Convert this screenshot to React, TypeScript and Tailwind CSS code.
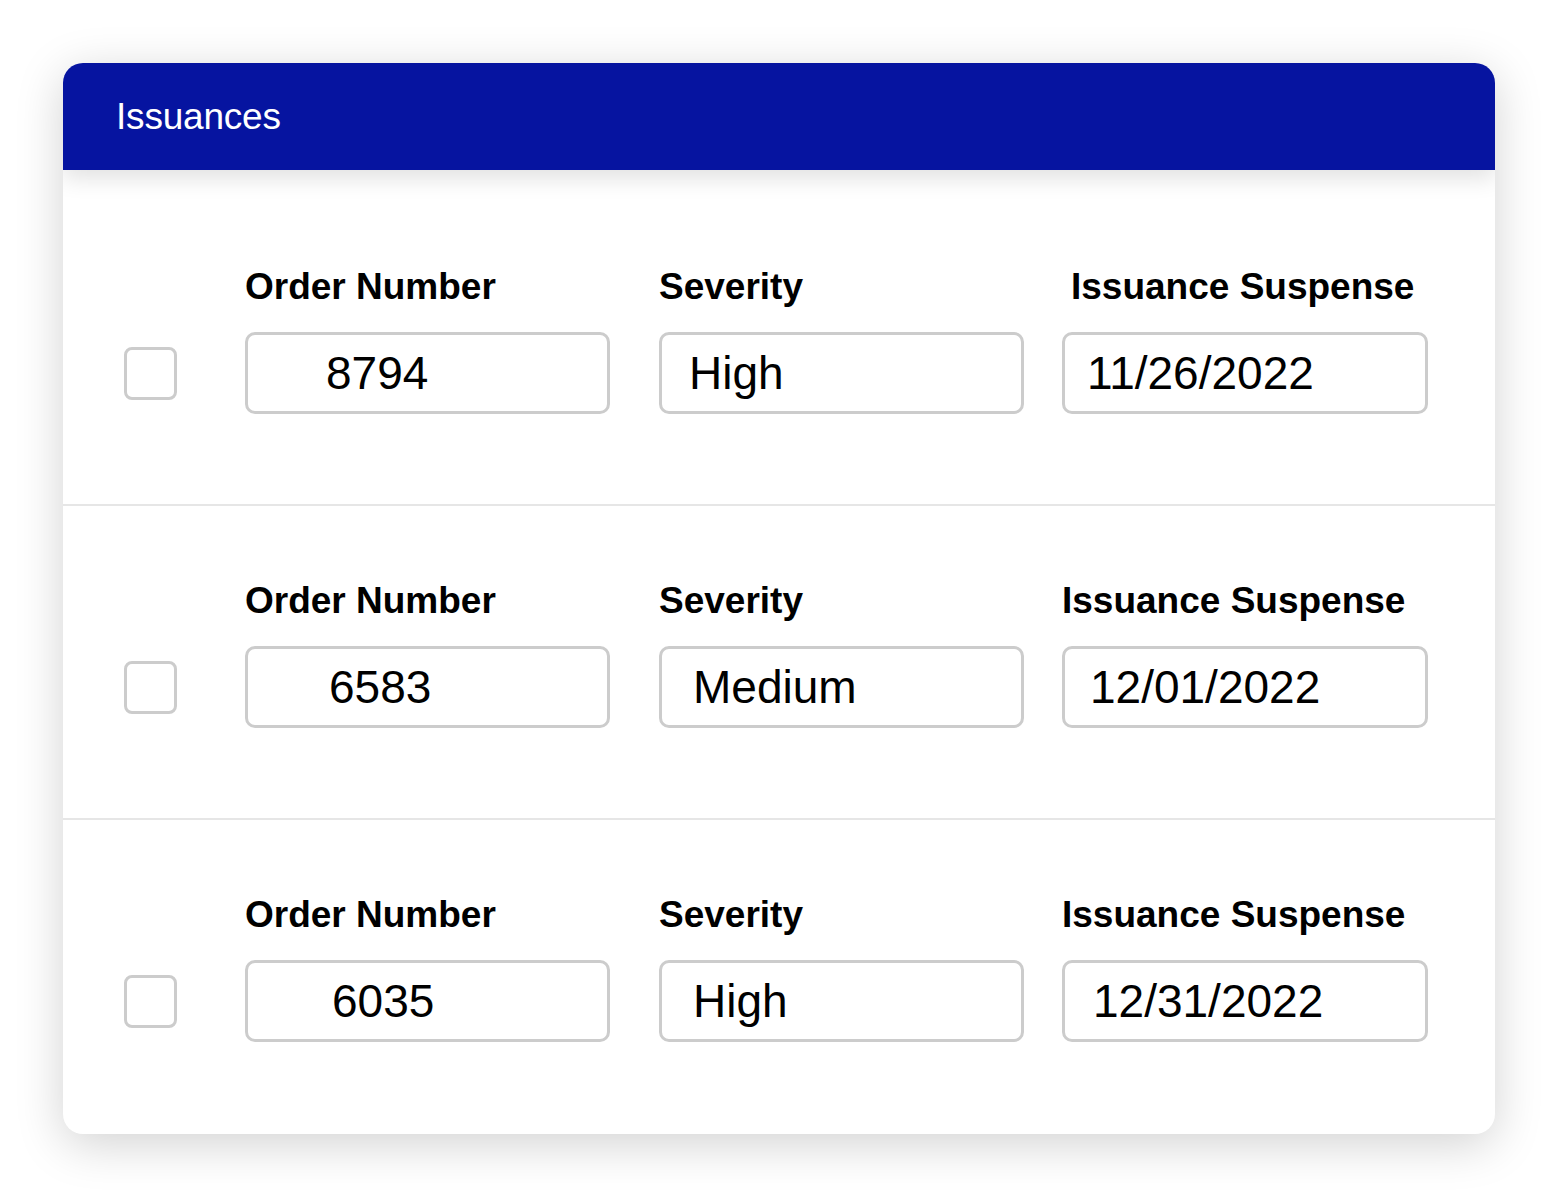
const rows = [
  {
    id: 1,
    top: 'pt-[95px] pb-[90px]',
    order: '8794',
    orderPad: 'pl-[78px]',
    severity: 'High',
    severityPad: 'pl-[27px]',
    date: '11/26/2022',
    datePad: 'pl-[22px]',
    dateLabel: 'pl-[9px]',
  },
  {
    id: 2,
    top: 'pt-[73px] pb-[90px] border-t-2 border-[#e6e6e6]',
    order: '6583',
    orderPad: 'pl-[81px]',
    severity: 'Medium',
    severityPad: 'pl-[31px]',
    date: '12/01/2022',
    datePad: 'pl-[25px]',
    dateLabel: 'pl-0',
  },
  {
    id: 3,
    top: 'pt-[73px] pb-[92px] border-t-2 border-[#e6e6e6]',
    order: '6035',
    orderPad: 'pl-[84px]',
    severity: 'High',
    severityPad: 'pl-[31px]',
    date: '12/31/2022',
    datePad: 'pl-[28px]',
    dateLabel: 'pl-0',
  },
];

function Field({ label, value, labelPad, valuePad, width }: { label: string; value: string; labelPad?: string; valuePad: string; width: string }) {
  return (
    <div className={`flex flex-col ${width}`}>
      <div className={`text-[37px] leading-[44px] font-bold text-black mb-[23px] whitespace-nowrap ${labelPad ?? ''}`}>{label}</div>
      <div className={`h-[82px] rounded-[10px] border-[3px] border-[#cccccc] bg-white flex items-center ${valuePad}`}>
        <span className="text-[46px] leading-none text-black">{value}</span>
      </div>
    </div>
  );
}

export default function App() {
  return (
    <div className="min-h-[1198px] w-full bg-white pt-[63px] pb-[64px] px-[63px]" style={{ fontFamily: '"Liberation Sans", Arial, sans-serif' }}>
      <div className="w-[1432px] rounded-[20px] bg-white shadow-[0_10px_48px_rgba(0,0,0,0.18)] overflow-hidden">
        {/* Header */}
        <div className="relative z-10 h-[107px] bg-[#0614a0] flex items-center pl-[53px] shadow-[0_8px_22px_rgba(0,0,0,0.12)]">
          <h1 className="text-[37px] font-light text-white tracking-[-0.2px]">Issuances</h1>
        </div>

        {/* Rows */}
        <div className="flex flex-col">
          {rows.map(r => (
            <div key={r.id} className={`flex items-end pl-[61px] ${r.top}`}>
              <div className="h-[82px] flex items-center">
                <div className="w-[53px] h-[53px] rounded-[8px] border-[3px] border-[#cccccc] bg-white" />
              </div>
              <div className="ml-[68px] flex items-end">
                <Field label="Order Number" value={r.order} valuePad={r.orderPad} width="w-[365px]" />
                <div className="ml-[49px]">
                  <Field label="Severity" value={r.severity} valuePad={r.severityPad} width="w-[365px]" />
                </div>
                <div className="ml-[38px]">
                  <Field label="Issuance Suspense" value={r.date} labelPad={r.dateLabel} valuePad={r.datePad} width="w-[366px]" />
                </div>
              </div>
            </div>
          ))}
        </div>
      </div>
    </div>
  );
}
